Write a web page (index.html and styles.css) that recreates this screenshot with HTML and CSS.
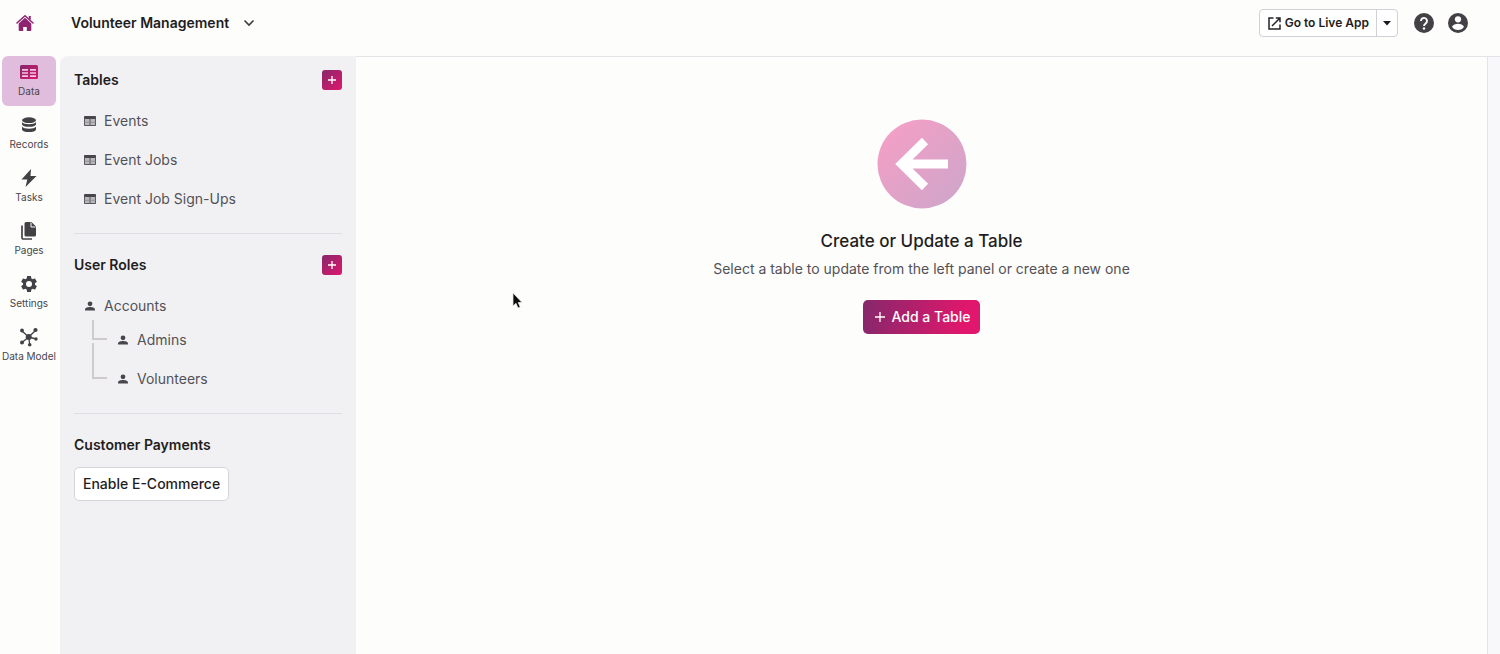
FILE: index.html
```html
<!DOCTYPE html>
<html lang="en">
<head>
<meta charset="utf-8">
<meta name="viewport" content="width=device-width, initial-scale=1">
<title>Volunteer Management</title>
<link rel="stylesheet" href="styles.css">
</head>
<body>
<svg class="defs" aria-hidden="true">
  <defs>
    <linearGradient id="brand" x1="0" y1="0" x2="1" y2="1"><stop offset="0" stop-color="#85286b"/><stop offset="1" stop-color="#e0176c"/></linearGradient>
    <linearGradient id="soft" x1="0" y1="0" x2="1" y2="1"><stop offset="0.1" stop-color="#f49fc5"/><stop offset="0.95" stop-color="#cea5ca"/></linearGradient>
    <symbol id="table" viewBox="0 0 12 10"><rect width="12" height="10" rx="1" fill="#b9b7bb"/><path d="M1 0h10a1 1 0 0 1 1 1v2H0V1a1 1 0 0 1 1-1z" fill="#48464a"/><path d="M.5 2v7.500h11V2M6 3v6.500" fill="none" stroke="#59575b"/><path d="M.5 6.300h11" fill="none" stroke="#8b898d" stroke-width=".8"/></symbol>
    <symbol id="person" viewBox="0 0 16 16"><circle cx="8" cy="4.500" r="3.800"/><path d="M0 15v-1.500C0 10.500 4.500 9.400 8 9.400s8 1.100 8 4.100V15z"/></symbol>
  </defs>
</svg>
<div class="app">
  <header class="topbar">
    <a class="home" href="#" aria-label="Home">
      <svg width="18" height="18" viewBox="0 0 18 18" fill="#8e2470"><path d="M1 9 9 1.700 17 9" fill="none" stroke="#8e2470" stroke-width="1.500" stroke-linecap="round" stroke-linejoin="round"/><path d="M12.800 2h2v4l-2-1.800z"/><path d="M9 3.800 15.300 9.500V16a1 1 0 0 1-1 1h-3.500v-4H7.200v4H3.700a1 1 0 0 1-1-1V9.500z"/></svg>
    </a>
    <button class="app-name" type="button">Volunteer Management
      <svg width="12" height="8" viewBox="0 0 12 8" fill="none" stroke="#3c3a3e" stroke-width="1.600"><path d="m1.500 1.500 4.500 4.500 4.500-4.500"/></svg>
    </button>
    <div class="actions">
      <div class="live">
        <button class="live-main" type="button">
          <svg width="13" height="13" viewBox="0 0 13 13" fill="none" stroke="#252327" stroke-width="1.500"><path d="M5.500 1H1v11h11V7.500M7.800 1H12v4.200M12 1 4 9"/></svg>
          Go to Live App
        </button>
        <button class="live-more" type="button" aria-label="More live app options"><svg width="8" height="5" viewBox="0 0 8 5"><path d="M0 0h8L4 4.500z" fill="#1d1b1f"/></svg></button>
      </div>
      <button class="round" type="button" aria-label="Help"><svg width="20" height="20" viewBox="0 0 20 20"><circle cx="10" cy="10" r="10" fill="#434145"/><path d="M7 8a3 3 0 1 1 4.700 2.400C10.500 11.300 10 11.700 10 13" fill="none" stroke="#fff" stroke-width="1.900"/><circle cx="10" cy="15.500" r="1.200" fill="#fff"/></svg></button>
      <button class="round" type="button" aria-label="Profile"><svg width="20" height="20" viewBox="0 0 20 20"><circle cx="10" cy="10" r="10" fill="#434145"/><circle cx="10" cy="6.300" r="3.100" fill="#fff"/><path d="M4 13.800c.8-2 3.700-3 6-3s5.200 1 6 3A7.200 7.200 0 0 1 10 17a7.200 7.200 0 0 1-6-3.200z" fill="#fff"/></svg></button>
    </div>
  </header>
  <div class="body">
    <nav class="rail" aria-label="Main">
      <a class="rail-item active" href="#"><svg width="20" height="20" viewBox="0 0 20 20"><rect x="1" y="3" width="18" height="14" rx="1.500" fill="url(#brand)"/><path d="M3 7.800h6M11 7.800h6M3 11h6M11 11h6M3 14.200h6M11 14.200h6" stroke="#f0c9e2" stroke-width="1.700"/></svg>Data</a>
      <a class="rail-item" href="#"><svg width="20" height="20" viewBox="0 0 20 20"><ellipse cx="10" cy="5.200" rx="7" ry="2.900"/><path d="M3 7.100c1.500 3 12.500 3 14 0v2.200c0 3.400-14 3.400-14 0zM3 11.600c1.500 3 12.500 3 14 0v2.600c0 3.800-14 3.800-14 0z"/></svg>Records</a>
      <a class="rail-item" href="#"><svg width="20" height="20" viewBox="0 0 20 20"><path d="M12 1 2.500 11.500h5.800L6.500 19 17.500 8h-6z"/></svg>Tasks</a>
      <a class="rail-item" href="#"><svg width="20" height="20" viewBox="0 0 20 20"><path d="M7 1h5.500L17 5.500V14a1.500 1.500 0 0 1-1.500 1.500H7A1.500 1.500 0 0 1 5.500 14V2.500A1.500 1.500 0 0 1 7 1z"/><path d="M12 1.500V6h4.500" fill="none" stroke="#fdfdfc"/><path d="M3 4.500V16.800a1.200 1.200 0 0 0 1.200 1.200H13" fill="none" stroke="#434145" stroke-width="1.700"/></svg>Pages</a>
      <a class="rail-item" href="#"><svg width="20" height="20" viewBox="0 0 24 24"><path d="M19.140 12.940a7 7 0 0 0 0-1.880l2.030-1.580a.5.5 0 0 0 .12-.61l-1.920-3.320a.5.5 0 0 0-.59-.22l-2.390.96a7 7 0 0 0-1.620-.94l-.36-2.540a.5.5 0 0 0-.48-.41h-3.840a.5.500 0 0 0-.47.41l-.36 2.540a7 7 0 0 0-1.620.94l-2.390-.96a.5.500 0 0 0-.59.22L2.740 8.870a.5.500 0 0 0 .12.610l2.030 1.580a7 7 0 0 0 0 1.880l-2.030 1.580a.5.500 0 0 0-.12.610l1.920 3.320c.12.220.37.290.59.220l2.390-.96c.5.380 1.030.7 1.620.94l.36 2.540c.05.240.24.410.48.410h3.840c.24 0 .44-.17.470-.41l.36-2.540a7 7 0 0 0 1.620-.94l2.390.96c.22.080.47 0 .59-.22l1.920-3.320a.5.500 0 0 0-.12-.61zM12 15.600a3.600 3.600 0 1 1 0-7.200 3.600 3.600 0 0 1 0 7.200z"/></svg>Settings</a>
      <a class="rail-item" href="#"><svg width="20" height="20" viewBox="0 0 20 20"><path d="M9.700 10 3 4M9.700 10l6.800-6.500M9.700 10 3 15.500M9.700 10l7.300 2M9.700 10l1 7.500" stroke="#434145" stroke-width="1.300"/><circle cx="9.700" cy="10" r="3"/><circle cx="3" cy="3.500" r="1.900"/><circle cx="16.500" cy="3" r="2.100"/><circle cx="3" cy="15.500" r="2"/><circle cx="17" cy="12" r="1.700"/><circle cx="10.700" cy="17.700" r="1.800"/></svg>Data Model</a>
    </nav>
    <aside class="sidebar">
      <section class="group">
        <div class="group-head"><h2>Tables</h2><button class="add" type="button" aria-label="Add table"><svg width="10" height="10" viewBox="0 0 10 10"><path d="M5 1v8M1 5h8" stroke="#fff" stroke-width="1.300"/></svg></button></div>
        <ul class="list">
          <li><a href="#"><svg class="glyph"><use href="#table"/></svg>Events</a></li>
          <li><a href="#"><svg class="glyph"><use href="#table"/></svg>Event Jobs</a></li>
          <li><a href="#"><svg class="glyph"><use href="#table"/></svg>Event Job Sign-Ups</a></li>
        </ul>
      </section>
      <section class="group">
        <div class="group-head"><h2>User Roles</h2><button class="add" type="button" aria-label="Add user role"><svg width="10" height="10" viewBox="0 0 10 10"><path d="M5 1v8M1 5h8" stroke="#fff" stroke-width="1.300"/></svg></button></div>
        <ul class="list">
          <li><a href="#"><svg class="glyph"><use href="#person"/></svg>Accounts</a>
            <ul class="children">
              <li><a href="#"><svg class="glyph"><use href="#person"/></svg>Admins</a></li>
              <li><a href="#"><svg class="glyph"><use href="#person"/></svg>Volunteers</a></li>
            </ul>
          </li>
        </ul>
      </section>
      <section class="group">
        <div class="group-head"><h2>Customer Payments</h2></div>
        <button class="outline" type="button">Enable E-Commerce</button>
      </section>
    </aside>
    <main class="content">
      <svg width="90" height="90" viewBox="0 0 90 90" aria-hidden="true"><circle cx="45" cy="45" r="44.500" fill="url(#soft)"/><path d="M71 45H25M48 22 24.500 45 48 68" fill="none" stroke="#fff" stroke-width="8.800"/></svg>
      <h1>Create or Update a Table</h1>
      <p>Select a table to update from the left panel or create a new one</p>
      <button class="primary" type="button"><svg width="10" height="10" viewBox="0 0 10 10"><path d="M5 0v10M0 5h10" stroke="#fff" stroke-width="1.300"/></svg>Add a Table</button>
    </main>
    <div class="gutter"></div>
  </div>
  <svg class="pointer" width="12" height="18" viewBox="0 0 12 18" aria-hidden="true"><path d="M1 1v13l3-2.700 2 4.700 2.200-1-2-4.500H10z" fill="#0b0b0b" stroke="#e4e4e6" stroke-width=".8"/></svg>
</div>
</body>
</html>
```
FILE: styles.css
```css
* { box-sizing: border-box; }

body {
  margin: 0;
  background: #fdfdfc;
  color: #1f1d21;
  font-family: Inter, "Liberation Sans", sans-serif;
  font-size: 14px;
  line-height: 20px;
}

h1, h2, p, ul { margin: 0; padding: 0; }
ul { list-style: none; }
a { color: inherit; text-decoration: none; }
button {
  display: flex;
  align-items: center;
  justify-content: center;
  padding: 0;
  border: 0;
  background: none;
  color: inherit;
  font: inherit;
  cursor: pointer;
}
svg { flex: none; }

.defs { position: absolute; width: 0; height: 0; }
.app { position: relative; display: flex; flex-direction: column; min-height: 100vh; }

.topbar { display: flex; align-items: center; height: 56px; padding: 0 32px 10px 16px; }
.home { display: flex; width: 55px; }
.app-name { gap: 14px; font-weight: 600; }
.actions { display: flex; align-items: center; gap: 14px; margin-left: auto; }
.live { display: flex; height: 28px; margin-right: 2px; border: 1px solid #d3cfd7; border-radius: 4px; background: #fff; }
.live-main { gap: 4px; padding: 0 7px 0 8px; font-size: 12px; font-weight: 600; }
.live-more { width: 21px; border-left: 1px solid #d3cfd7; }

.body { display: flex; flex: 1; }

.rail { display: flex; flex-direction: column; gap: 3px; width: 60px; padding: 0 4px 0 2px; }
.rail-item {
  display: flex;
  flex-direction: column;
  align-items: center;
  gap: 2px;
  height: 50px;
  padding-top: 6px;
  border-radius: 6px;
  color: #48464a;
  fill: #434145;
  font-size: 10px;
  line-height: 14px;
  white-space: nowrap;
}
.rail-item.active { background: #e1bddd; }

.sidebar { width: 296px; padding: 13px 14px 0; border-radius: 8px 0 0; background: #f1f1f4; }
.group + .group { margin-top: 15px; padding-top: 20px; border-top: 1px solid #dfdee2; }
.group-head { display: flex; align-items: center; justify-content: space-between; height: 21px; }
.group-head h2 { font-size: 14px; font-weight: 600; }
.add { width: 20px; height: 20px; border-radius: 3px; background: linear-gradient(135deg, #85286b, #e0176c); }
.list { margin-top: 11px; color: #535156; fill: #48464a; }
.list a { display: flex; align-items: center; gap: 8px; height: 39px; padding-left: 10px; }
.glyph { width: 12px; height: 10px; }

.children { display: flex; flex-direction: column; margin-top: -5px; padding-left: 18px; }
.list .children a { padding-left: 10px; }
.children li { display: flex; }
.children li::before { width: 13px; height: 18px; border: solid #cfcace; border-width: 0 0 2px 2px; content: ""; }
.children li + li::before { height: 34px; margin-top: -16px; }

.outline { height: 34px; margin-top: 12px; padding: 0 8px; border: 1px solid #d6d4d9; border-radius: 5px; background: #fff; font-weight: 500; }

.content { display: flex; flex: 1; flex-direction: column; align-items: center; padding-top: 62px; border-top: 1px solid #e4e3e7; }
.content h1 { margin-top: 20px; font-size: 17px; font-weight: 500; line-height: 24px; }
.content p { margin-top: 6px; color: #535156; }
.primary { gap: 6px; height: 34px; margin-top: 21px; padding: 0 9px 0 12px; border-radius: 5px; background: linear-gradient(100deg, #85286b, #e0176c 85%); color: #fff; font-weight: 500; }
.gutter { width: 13px; border: solid #e4e3e7; border-width: 1px 0 0 1px; background: #f8f8fa; }

.pointer { position: absolute; top: 292px; left: 512px; }
```
